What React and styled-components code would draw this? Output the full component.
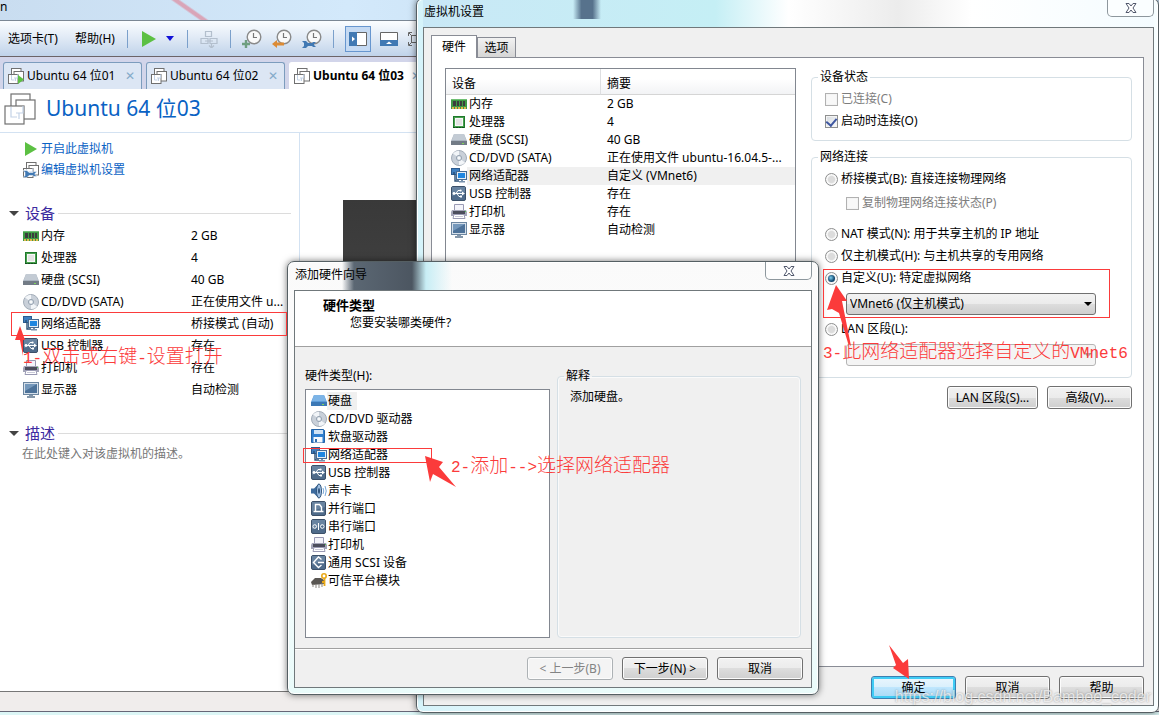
import styled, { createGlobalStyle, css } from 'styled-components';

const summary = [
  { icon: 'memory', name: '内存', value: '2 GB' },
  { icon: 'cpu', name: '处理器', value: '4' },
  { icon: 'disk', name: '硬盘 (SCSI)', value: '40 GB' },
  { icon: 'cd', name: 'CD/DVD (SATA)', value: '正在使用文件 u...' },
  { icon: 'network', name: '网络适配器', value: '桥接模式 (自动)' },
  { icon: 'usb', name: 'USB 控制器', value: '存在' },
  { icon: 'printer', name: '打印机', value: '存在' },
  { icon: 'display', name: '显示器', value: '自动检测' },
];

const settings = summary.map((item) => {
  if (item.icon === 'cd') return { ...item, value: '正在使用文件 ubuntu-16.04.5-...' };
  if (item.icon === 'network') return { ...item, value: '自定义 (VMnet6)', selected: true };
  return item;
});

const hardwareTypes = [
  { icon: 'blueDisk', name: '硬盘', selected: true },
  { icon: 'cd', name: 'CD/DVD 驱动器' },
  { icon: 'floppy', name: '软盘驱动器' },
  { icon: 'network', name: '网络适配器' },
  { icon: 'usb', name: 'USB 控制器' },
  { icon: 'sound', name: '声卡' },
  { icon: 'parallel', name: '并行端口' },
  { icon: 'serial', name: '串行端口' },
  { icon: 'printer', name: '打印机' },
  { icon: 'scsi', name: '通用 SCSI 设备' },
  { icon: 'tpm', name: '可信平台模块' },
];

const tile = (
  <>
    <rect x="0.5" y="0.5" width="14" height="14" rx="1.5" fill="#4f6b8a" stroke="#3c5069" />
    <path d="M1 1h13v5L1 10z" fill="#6883a0" />
  </>
);

const drawings = {
  memory: (
    <>
      <path d="M0 3h16v10H0z" fill="#3e9a45" />
      <path d="M0 3h16v1H0z" fill="#6fbf73" />
      <path d="M2 5h3v5H2zM6 5h2v5H6zM9 5h2v5H9zM12 5h2v5h-2z" fill="#3a3f3c" />
      <path d="M1 12h14" stroke="#e0b64c" strokeWidth="2" strokeDasharray="2 1" />
    </>
  ),
  cpu: (
    <>
      <rect x="2.5" y="2.5" width="11" height="11" fill="#49a04f" stroke="#1f7a2c" />
      <rect x="4.5" y="4.5" width="7" height="7" fill="#e4e4e4" stroke="#f8f8f8" />
      <path d="M2 13.5h12" stroke="#12501b" strokeDasharray="2 1" />
    </>
  ),
  disk: (
    <>
      <path d="M3 2h10l3 7v4H0V9z" fill="#aab4c0" />
      <path d="M3 2h10l2 6H1z" fill="#c3cbd4" />
      <path d="M0 9h16v4H0z" fill="#727b86" />
      <path d="M11 11.5h2" stroke="#7ed957" />
    </>
  ),
  blueDisk: (
    <>
      <path d="M3 2h10l3 7v4H0V9z" fill="#5b9bd8" />
      <path d="M3 2h10l2 6H1z" fill="#7db4e6" />
      <path d="M0 9h16v4H0z" fill="#3b78b5" />
      <path d="M11 11.5h2" stroke="#7ed957" />
    </>
  ),
  cd: (
    <>
      <circle cx="8" cy="8" r="7.5" fill="#c9d0d9" stroke="#a3adb8" />
      <path d="M8 8L2 3.5A7.5 7.5 0 0 1 8 .8zM8 8l6 4.5A7.5 7.5 0 0 1 8 15z" fill="#f2f5f8" />
      <circle cx="8" cy="8" r="2.6" fill="#dfe5ec" stroke="#98a4b2" />
      <circle cx="8" cy="8" r="1" fill="#fff" />
    </>
  ),
  network: (
    <>
      <rect x="0.5" y="0.5" width="8" height="6" fill="#3f7fc0" stroke="#2d5b8e" />
      <path d="M4 7v6h4M3 4v3" fill="none" stroke="#2c4f75" strokeWidth="1.4" />
      <rect x="5.5" y="3.5" width="10" height="8" fill="#e6eef6" stroke="#4a6c91" />
      <rect x="7" y="5" width="7" height="5" fill="#1f86e0" />
      <path d="M10 12h2v1h2v1.5H8V13h2z" fill="#7790ab" />
    </>
  ),
  usb: (
    <>
      {tile}
      <path d="M2 7.5h9M5 7.5l2-3h2M6 7.5l2 3h1" fill="none" stroke="#fff" />
      <path d="M11 5.5l3 2-3 2z" fill="#fff" />
      <circle cx="3" cy="7.5" r="1.4" fill="#fff" />
      <circle cx="9.6" cy="4.5" r="1.1" fill="#fff" />
      <path d="M9 9.5h2v2H9z" fill="#fff" />
    </>
  ),
  printer: (
    <>
      <path d="M3.5 0.5h9v6h-9z" fill="#f4f4fa" stroke="#9a9ab4" />
      <path d="M1 6h14l1 2v4H0V8z" fill="#a4a5b8" />
      <path d="M2 7h12v3H2z" fill="#4b4d5c" />
      <path d="M14 7.5h1" stroke="#55c552" />
      <path d="M3 10.500h10l1 4H2z" fill="#fff" stroke="#9a9ab4" />
      <path d="M4 12.500h8" stroke="#c9c9d8" />
    </>
  ),
  display: (
    <>
      <rect x="0.5" y="0.5" width="15" height="12" fill="#d6e0ea" stroke="#6c86a0" />
      <rect x="2" y="2" width="12" height="9" fill="#4d7299" />
      <path d="M2 2h12L2 9z" fill="#7598bb" />
      <path d="M6 13h4v1h2v2H4v-2h2z" fill="#8497aa" />
    </>
  ),
  floppy: (
    <>
      <path d="M0.5 0.5h12l1 1v12h-13z" fill="#2f7fd0" stroke="#2463a6" />
      <path d="M3 1h9v4H3z" fill="#cfe3f7" />
      <path d="M2.5 8h9v5.5h-9z" fill="#f5f9fd" />
      <path d="M4 10h2v3H4z" fill="#2f6cae" />
    </>
  ),
  sound: (
    <>
      <path d="M0 5.500h3L8 0.500v15L3 10.500H0z" fill="#3c6a9d" />
      <ellipse cx="8" cy="8" rx="2.500" ry="7" fill="#9dbde0" stroke="#31577f" />
      <ellipse cx="8" cy="8" rx="1" ry="3" fill="#2c5079" />
      <path d="M12 5q1.500 3 0 6M14 3q2.500 5 0 10" fill="none" stroke="#76a6d6" />
    </>
  ),
  parallel: (
    <>
      {tile}
      <path d="M4.5 10V3.500h4L10.500 6v4M2.500 10.500h10" fill="none" stroke="#fff" strokeWidth="1.4" />
    </>
  ),
  serial: (
    <>
      {tile}
      <circle cx="3.700" cy="7.500" r="1.800" fill="none" stroke="#fff" />
      <circle cx="11.300" cy="7.500" r="1.800" fill="none" stroke="#fff" />
      <path d="M7.500 4v7" stroke="#fff" />
    </>
  ),
  scsi: (
    <>
      {tile}
      <path
        d="M10.500 4.500L7.500 2 2.500 7.500l5 5 3-2.500M7 7.500h6"
        fill="none"
        stroke="#fff"
        strokeWidth="1.4"
      />
    </>
  ),
  tpm: (
    <>
      <path d="M0 9l4-4h6l3 2v4L1 12z" fill="#5a5753" />
      <path d="M2 11v3M5 11v4M8 11v4M11 10v4" stroke="#8b8781" />
      <circle cx="13" cy="3" r="2.200" fill="none" stroke="#e9a817" strokeWidth="1.600" />
      <path d="M13.500 5v8M13 9h-2" stroke="#e9a817" strokeWidth="1.800" />
    </>
  ),
};

const wrench = 'M0 0h4l2 2h4l1 -1h3l-2 2v1l2 2h-3l-1 -1H6L4 7H0l2-2V2z';

function HardwareIcon({ type }) {
  return (
    <Glyph width="16" height="16" viewBox="0 0 16 16" aria-hidden="true">
      {drawings[type]}
    </Glyph>
  );
}

function StackIcon({ size, badge }) {
  return (
    <Glyph width={size} height={size} viewBox="0 0 32 32" aria-hidden="true">
      <g fill="#fff" stroke="#707070" strokeWidth={size > 20 ? 1.2 : 2}>
        <rect x="7" y="1" width="19" height="19" />
        <rect x="12" y="7" width="19" height="19" />
        <rect x="1" y="13" width="19" height="18" />
      </g>
      <path
        d="M7 14v10h6M12 20h7v-7M15 20v6"
        fill="none"
        stroke="#c3d2e6"
        strokeWidth={size > 20 ? 1.2 : 2}
      />
      {badge === 'play' && <path d="M20 14l12 9-12 9z" fill="#5cc043" />}
      {badge === 'wrench' && (
        <path d={wrench} fill="#4179b3" stroke="#fff" strokeWidth="0.5" transform="translate(0 17) scale(2)" />
      )}
    </Glyph>
  );
}

function ClockIcon({ children }) {
  return (
    <Glyph width="20" height="20" viewBox="0 0 20 20" aria-hidden="true">
      <circle cx="12" cy="8" r="6.8" fill="#fafafa" stroke="#8a8a8a" strokeWidth="1.4" />
      <path d="M11.5 4v4.500H15" fill="none" stroke="#777" strokeWidth="1.2" />
      {children}
    </Glyph>
  );
}

function CloseIcon() {
  return (
    <Glyph width="12" height="10" viewBox="0 0 12 10" aria-hidden="true">
      <path
        d="M1 0.500h3l2 2.500 2-2.500h3L8 5l3 4.500H8L6 7 4 9.500H1L4 5z"
        fill="#fff"
        stroke="#51586c"
      />
    </Glyph>
  );
}

function MainWindow() {
  return (
    <Machine>
      <TitleStrip>n</TitleStrip>
      <Toolbar>
        <Menus>
          <MenuButton type="button">选项卡(T)</MenuButton>
          <MenuButton type="button">帮助(H)</MenuButton>
        </Menus>
        <Separator />
        <Tools $gap={5}>
          <ToolButton type="button" aria-label="开启">
            <svg width="14" height="16" viewBox="0 0 14 16">
              <path d="M0 0l14 8-14 8z" fill="#5cc043" />
            </svg>
          </ToolButton>
          <ToolButton type="button" $width={12} aria-label="电源选项">
            <svg width="8" height="5" viewBox="0 0 8 5">
              <path d="M0 0h8L4 5z" fill="#1212d8" />
            </svg>
          </ToolButton>
        </Tools>
        <Separator />
        <ToolButton type="button" aria-label="发送" disabled>
          <svg width="18" height="18" viewBox="0 0 18 18">
            <path
              d="M5.500 1.500h6v5h-6zM1 8.500h7v5H1zM10 8.500h7v5h-7zM5 11h8M11.500 14v4M9 15.500l2.500 2.500 2.500-2.500"
              fill="none"
              stroke="#b3bfcd"
              strokeWidth="1.2"
            />
          </svg>
        </ToolButton>
        <Separator />
        <Tools $gap={10}>
          <ToolButton type="button" aria-label="拍摄快照">
            <ClockIcon>
              <path d="M4 11v8M0 15h8" stroke="#6f9f80" strokeWidth="2.4" />
            </ClockIcon>
          </ToolButton>
          <ToolButton type="button" aria-label="恢复快照">
            <ClockIcon>
              <path d="M0 15l5-4v2.500h7v3H5V19z" fill="#dc8b35" />
            </ClockIcon>
          </ToolButton>
          <ToolButton type="button" aria-label="管理快照">
            <ClockIcon>
              <path d={wrench} fill="#4179b3" transform="translate(0 12)" />
            </ClockIcon>
          </ToolButton>
        </Tools>
        <Separator />
        <Tools $gap={8}>
          <ToolButton type="button" $width={26} $pressed aria-label="显示库">
            <svg width="18" height="14" viewBox="0 0 18 14">
              <path d="M0.500 0.500h17v13H0.500z" fill="#fff" stroke="#666" />
              <path d="M0 0h8v14H0z" fill="#4179b3" />
              <path d="M3 4.500l3 2.500-3 2.500z" fill="#fff" />
            </svg>
          </ToolButton>
          <ToolButton type="button" aria-label="显示缩略图">
            <svg width="18" height="14" viewBox="0 0 18 14">
              <path d="M0.500 0.500h17v13H0.500z" fill="#fff" stroke="#666" />
              <path d="M0 8h18v6H0z" fill="#4179b3" />
              <path d="M6 12l3-2.500 3 2.500z" fill="#fff" />
            </svg>
          </ToolButton>
          <ToolButton type="button" aria-label="全屏">
            <svg width="18" height="14" viewBox="0 0 18 14">
              <path
                d="M3.500 3.500h11v7h-11zM0.500 4V0.500H4M14 0.500h3.500V4M0.500 10v3.500H4M14 13.500h3.500V10M1 1l3 3M1 13l3-3"
                fill="none"
                stroke="#666"
              />
            </svg>
          </ToolButton>
        </Tools>
      </Toolbar>
      <MachineTabs>
        <MachineTab>
          <StackIcon size={16} badge="play" />
          <span>Ubuntu 64 位01</span>
          <TabClose type="button" aria-label="关闭">✕</TabClose>
        </MachineTab>
        <MachineTab>
          <StackIcon size={16} />
          <span>Ubuntu 64 位02</span>
          <TabClose type="button" aria-label="关闭">✕</TabClose>
        </MachineTab>
        <MachineTab $active>
          <StackIcon size={16} />
          <span>Ubuntu 64 位03</span>
          <TabClose type="button" aria-label="关闭">✕</TabClose>
        </MachineTab>
      </MachineTabs>
      <MachineHeader>
        <StackIcon size={32} />
        <h1>Ubuntu 64 位03</h1>
      </MachineHeader>
      <MachineBody>
        <Sidebar>
          <Commands>
            <a href="#start">
              <Glyph width="16" height="16" viewBox="0 0 16 16" aria-hidden="true">
                <path d="M2 1l12 7-12 7z" fill="#5cc043" />
              </Glyph>
              开启此虚拟机
            </a>
            <a href="#edit">
              <StackIcon size={16} badge="wrench" />
              编辑虚拟机设置
            </a>
          </Commands>
          <SectionTitle>设备</SectionTitle>
          <DeviceTable>
            <tbody>
              {summary.map((item) => (
                <tr key={item.name}>
                  <td>
                    <IconLabel>
                      <HardwareIcon type={item.icon} />
                      {item.name}
                    </IconLabel>
                  </td>
                  <td>{item.value}</td>
                </tr>
              ))}
            </tbody>
          </DeviceTable>
          <SectionTitle>描述</SectionTitle>
          <Description>在此处键入对该虚拟机的描述。</Description>
        </Sidebar>
        <Preview>
          <Screen />
        </Preview>
      </MachineBody>
      <StatusBar />
    </Machine>
  );
}

function SettingsDialog() {
  return (
    <Settings>
      <TitleBar $tint>
        <h2>虚拟机设置</h2>
        <CloseButton type="button" aria-label="关闭">
          <CloseIcon />
        </CloseButton>
      </TitleBar>
      <SettingsClient>
        <DialogTabs>
          <DialogTab type="button" $active>硬件</DialogTab>
          <DialogTab type="button">选项</DialogTab>
        </DialogTabs>
        <TabPanel>
          <HardwareList>
            <HardwareTable>
              <thead>
                <tr>
                  <th>设备</th>
                  <th>摘要</th>
                </tr>
              </thead>
              <tbody>
                {settings.map((item) => (
                  <Row key={item.name} $selected={item.selected}>
                    <td>
                      <IconLabel>
                        <HardwareIcon type={item.icon} />
                        {item.name}
                      </IconLabel>
                    </td>
                    <td>{item.value}</td>
                  </Row>
                ))}
              </tbody>
            </HardwareTable>
          </HardwareList>
          <Options>
            <Group>
              <legend>设备状态</legend>
              <Option $disabled>
                <CheckBox disabled />
                已连接(C)
              </Option>
              <Option>
                <CheckBox defaultChecked />
                启动时连接(O)
              </Option>
            </Group>
            <Group>
              <legend>网络连接</legend>
              <Option>
                <Radio name="net" />
                桥接模式(B): 直接连接物理网络
              </Option>
              <Replicate>
                <Option $disabled>
                  <CheckBox disabled />
                  复制物理网络连接状态(P)
                </Option>
              </Replicate>
              <Option>
                <Radio name="net" />
                NAT 模式(N): 用于共享主机的 IP 地址
              </Option>
              <Option>
                <Radio name="net" />
                仅主机模式(H): 与主机共享的专用网络
              </Option>
              <Option>
                <Radio name="net" defaultChecked />
                自定义(U): 特定虚拟网络
              </Option>
              <SelectBox>
                <select aria-label="特定虚拟网络">
                  <option>VMnet6 (仅主机模式)</option>
                </select>
              </SelectBox>
              <Option>
                <Radio name="net" />
                LAN 区段(L):
              </Option>
              <SelectBox $disabled>
                <select aria-label="LAN 区段" disabled />
              </SelectBox>
            </Group>
            <OptionButtons>
              <Button type="button" $width={91}>LAN 区段(S)...</Button>
              <Button type="button">高级(V)...</Button>
            </OptionButtons>
          </Options>
        </TabPanel>
        <Footer>
          <Button type="button" $primary>确定</Button>
          <Button type="button">取消</Button>
          <Button type="button">帮助</Button>
        </Footer>
      </SettingsClient>
    </Settings>
  );
}

function WizardDialog() {
  return (
    <Wizard>
      <TitleBar>
        <h2>添加硬件向导</h2>
        <CloseButton type="button" aria-label="关闭">
          <CloseIcon />
        </CloseButton>
      </TitleBar>
      <WizardClient>
        <WizardHeader>
          <h3>硬件类型</h3>
          <p>您要安装哪类硬件?</p>
        </WizardHeader>
        <WizardBody>
          <TypeColumn>
            <span id="types">硬件类型(H):</span>
            <TypeList aria-labelledby="types">
              {hardwareTypes.map((item) => (
                <TypeItem key={item.name} $selected={item.selected}>
                  <HardwareIcon type={item.icon} />
                  <span>{item.name}</span>
                </TypeItem>
              ))}
            </TypeList>
          </TypeColumn>
          <Explain>
            <legend>解释</legend>
            添加硬盘。
          </Explain>
        </WizardBody>
        <WizardFooter>
          <Button type="button" $width={86} disabled>&lt; 上一步(B)</Button>
          <Button type="button" $width={86}>下一步(N) &gt;</Button>
          <Button type="button" $width={86}>取消</Button>
        </WizardFooter>
      </WizardClient>
    </Wizard>
  );
}

function Annotations() {
  return (
    <>
      <Frame $x={11} $y={312} $w={276} $h={24} />
      <Frame $x={303} $y={448} $w={129} $h={15} />
      <Frame $x={823} $y={269} $w={287} $h={49} />
      <Arrows width="1159" height="715" viewBox="0 0 1159 715" aria-hidden="true">
        <path d="M20 326l5 14-2 0 0 16-3-16-5 0z" />
        <path d="M425 456l18 6-4 5 17 20-23-13-3 8z" />
        <path d="M836 285l11 16-5 0 9 45-3-3-9-30-7-4-5 1z" />
        <path d="M889 645l14 18 5-4 1 20-16-11 3-3z" />
      </Arrows>
      <Note $x={23} $y={343}>
        <Half>1-</Half>双击或右键<Half>-</Half>设置打开
      </Note>
      <Note $x={451} $y={452}>
        <Half>2-</Half>添加<Half>--&gt;</Half>选择网络适配器
      </Note>
      <Note $x={823} $y={338}>
        <Half>3-</Half>此网络适配器选择自定义的<Half>VMnet6</Half>
      </Note>
      <Watermark>https://blog.csdn.net/Bamboo_coder</Watermark>
    </>
  );
}

export default function App() {
  return (
    <Desktop>
      <GlobalStyle />
      <MainWindow />
      <SettingsDialog />
      <WizardDialog />
      <Annotations />
    </Desktop>
  );
}

const GlobalStyle = createGlobalStyle`
  * {
    box-sizing: border-box;
  }
  body {
    margin: 0;
    background: #dff0f8;
    color: #000;
    font-family: 'Noto Sans', 'Noto Sans CJK SC', sans-serif;
    font-size: 12px;
    line-height: 18px;
  }
  button,
  select {
    font: inherit;
    color: inherit;
    padding: 0;
  }
  h1, h2, h3, p, ul {
    margin: 0;
    padding: 0;
    font-weight: 400;
  }
  h2 {
    font-size: 12px;
  }
`;

const Desktop = styled.main`
  position: relative;
  min-height: 100vh;
  overflow: hidden;
`;

const Glyph = styled.svg`
  flex: none;
`;

const Machine = styled.section`
  display: flex;
  flex-direction: column;
  height: 100vh;
  white-space: nowrap;
`;

const TitleStrip = styled.header`
  height: 20px;
  line-height: 14px;
  background: linear-gradient(35deg, transparent 44%, #d9a5b8 48% 54%, transparent 58%) 165px 0 / 48px
      20px no-repeat,
    linear-gradient(90deg, #c9ddf0, #d3e9fb 30%, #c9e0f2 50%, #d6ecfd 65%, #c3d8ea);
`;

const Toolbar = styled.div`
  display: flex;
  align-items: center;
  gap: 11px;
  height: 37px;
  padding-left: 8px;
  border-top: 1px solid #7b8794;
  border-bottom: 1px solid #6c6468;
  background: linear-gradient(#fbfdff, #dfe9f5 50%, #c0d3ea);
`;

const Menus = styled.nav`
  display: flex;
  gap: 17px;
  padding-right: 1px;
`;

const MenuButton = styled.button`
  border: 0;
  background: none;
`;

const Separator = styled.i`
  width: 1px;
  height: 18px;
  background: #7ba0cb;
`;

const Tools = styled.div`
  display: flex;
  align-items: center;
  gap: ${(props) => props.$gap}px;
`;

const ToolButton = styled.button`
  display: grid;
  flex: none;
  place-items: center;
  width: ${(props) => props.$width || 20}px;
  height: 26px;
  border: ${(props) => (props.$pressed ? '1px solid #6796cf' : '0')};
  background: ${(props) => (props.$pressed ? '#c5daf3' : 'none')};
`;

const MachineTabs = styled.nav`
  display: flex;
  align-items: flex-end;
  gap: 4px;
  height: 32px;
  padding-left: 3px;
  background: #d2d5ea;
`;

const MachineTab = styled.div`
  display: flex;
  align-items: center;
  gap: 3px;
  width: 139px;
  height: 27px;
  padding: 0 6px 0 4px;
  border: 1px solid #7c9cbd;
  border-bottom: 0;
  border-radius: 3px 3px 0 0;
  background: #dce6f4;
  ${(props) =>
    props.$active &&
    css`
      border-color: #fff;
      background: #fff;
      font-weight: 700;
    `}
`;

const TabClose = styled.button`
  margin-left: auto;
  border: 0;
  background: none;
  color: #84abc9;
  font: 700 12px/18px 'DejaVu Sans', sans-serif;
`;

const MachineHeader = styled.header`
  display: flex;
  align-items: center;
  gap: 10px;
  height: 44px;
  padding: 0 0 4px 4px;
  border-bottom: 1px solid #d3e2f2;
  background: #fff;
  h1 {
    color: #0a62c4;
    font-size: 21px;
    line-height: 34px;
    padding-bottom: 2px;
  }
`;

const MachineBody = styled.div`
  display: flex;
  flex: 1;
  background: #fff;
`;

const Sidebar = styled.aside`
  flex: none;
  width: 300px;
  border-right: 1px solid #d3e2f2;
`;

const Commands = styled.nav`
  display: grid;
  padding: 5px 0 22px 23px;
  a {
    display: flex;
    align-items: center;
    gap: 2px;
    height: 21px;
    color: #0a62c4;
    text-decoration: none;
  }
`;

const SectionTitle = styled.h2`
  display: flex;
  align-items: center;
  gap: 3px;
  height: 22px;
  margin-right: 8px;
  padding-left: 9px;
  color: #3c2ba0;
  && {
    font-size: 15px;
  }
  &::before {
    content: '';
    margin-right: 3px;
    border: 5px solid transparent;
    border-top-color: #444;
    border-bottom: 0;
  }
  &::after {
    content: '';
    flex: 1;
    height: 1px;
    background: #dcdcdc;
  }
`;

const DeviceTable = styled.table`
  width: 100%;
  margin: 1px 0 21px;
  border-collapse: collapse;
  table-layout: fixed;
  td {
    height: 22px;
    padding: 0;
  }
  td:first-child {
    width: 191px;
    padding-left: 23px;
  }
`;

const IconLabel = styled.span`
  display: flex;
  align-items: center;
  gap: 2px;
`;

const Description = styled.p`
  padding: 1px 0 0 22px;
  color: #777;
`;

const Preview = styled.div`
  flex: 1;
  padding: 67px 0 0 43px;
`;

const Screen = styled.div`
  width: 300px;
  height: 200px;
  background: linear-gradient(#393939, #4a4a4a);
`;

const StatusBar = styled.footer`
  height: 24px;
  border-top: 1px solid #777;
  border-bottom: 3px solid #dcf6f6;
  background: #f0edec;
  box-shadow: inset 0 -1px #667;
`;

const windowFrame = css`
  position: absolute;
  display: flex;
  flex-direction: column;
  border: 1px solid #555f63;
  border-radius: 7px;
  box-shadow: 0 0 7px rgba(0, 0, 0, 0.55), inset 0 0 0 1px #fff;
  white-space: nowrap;
`;

const Settings = styled.section`
  ${windowFrame}
  top: -2px;
  right: 0;
  bottom: 2px;
  left: 416px;
  padding: 0 4px 6px 6px;
  background: linear-gradient(90deg, #d5f3fa, #fff 40%, #f6feff);
`;

const Wizard = styled.section`
  ${windowFrame}
  top: 261px;
  left: 287px;
  width: 532px;
  padding: 0 6px 6px;
  background: linear-gradient(#fafafa, #fff 50%, #e9fbfa);
`;

const TitleBar = styled.header`
  display: flex;
  justify-content: space-between;
  height: 28px;
  padding-left: 1px;
  line-height: 26px;
  background: ${(props) =>
    props.$tint
      ? `linear-gradient(90deg, transparent, #57728c 30% 70%, transparent) 150px 0 / 28px 20px no-repeat,
         linear-gradient(90deg, #c9e8f6, #c5eff5 40%, #fff 50%, #ececec 65%, #fff 75%, #f4fcff)`
      : `linear-gradient(90deg, transparent, #5b6773 12px, #4c5661 70px, #c8eef5 84px, transparent 110px)
           48px 0 / 120px 28px no-repeat`};
`;

const CloseButton = styled.button`
  display: grid;
  place-items: center;
  width: 47px;
  height: 18px;
  border: 1px solid #8d979d;
  border-top: 0;
  border-radius: 0 0 5px 5px;
  background: rgba(255, 255, 255, 0.5);
`;

const client = css`
  display: flex;
  flex: 1;
  flex-direction: column;
  border: 1px solid #70787b;
  background: #f0f0f0;
`;

const SettingsClient = styled.div`
  ${client}
  padding: 7px 9px 6px 7px;
`;

const DialogTabs = styled.nav`
  display: flex;
  align-items: flex-end;
`;

const DialogTab = styled.button`
  width: 39px;
  height: 20px;
  border: 1px solid #898c95;
  border-bottom: 0;
  background: linear-gradient(#f2f2f2, #d6d6d6);
  ${(props) =>
    props.$active &&
    css`
      z-index: 1;
      width: 46px;
      height: 23px;
      margin-bottom: -1px;
      background: #fff;
    `}
`;

const TabPanel = styled.div`
  display: flex;
  flex: 1;
  gap: 15px;
  padding: 10px 11px 10px 13px;
  border: 1px solid #898c95;
  background: #fff;
`;

const HardwareList = styled.div`
  flex: 1;
  border: 1px solid #828790;
`;

const HardwareTable = styled.table`
  width: 100%;
  border-spacing: 0;
  table-layout: fixed;
  th {
    height: 26px;
    padding: 4px 0 0 6px;
    border-bottom: 1px solid #d5d5d5;
    background: linear-gradient(#fff 40%, #f2f3f5);
    font-weight: 400;
    text-align: left;
  }
  th:first-child {
    width: 155px;
    border-right: 1px solid #dedfe1;
  }
  td {
    height: 18px;
    padding: 0 0 0 6px;
  }
  td:first-child {
    padding-left: 5px;
  }
`;

const Row = styled.tr`
  background: ${(props) =>
    props.$selected ? 'linear-gradient(90deg, #fff 21px, #f0f0f0 21px)' : 'none'};
`;

const Options = styled.div`
  flex: none;
  width: 321px;
`;

const Group = styled.fieldset`
  margin: 0 0 7px;
  padding: 2px 13px 8px;
  border: 1px solid #d5dfe5;
  border-radius: 4px;
  legend {
    margin-left: -7px;
    padding: 0 2px;
  }
`;

const Option = styled.label`
  display: flex;
  align-items: center;
  gap: 3px;
  height: 22px;
  color: ${(props) => (props.$disabled ? '#7d7d7d' : '#000')};
`;

const Replicate = styled.div`
  padding: 2px 0 9px 21px;
`;

const CheckBox = styled.input.attrs({ type: 'checkbox' })`
  appearance: none;
  display: grid;
  place-items: center;
  width: 13px;
  height: 13px;
  margin: 0;
  border: 1px solid #8e8f8f;
  background: linear-gradient(135deg, #d5dade, #fafbfc);
  box-shadow: inset 0 0 0 1px #f4f4f4;
  &:disabled {
    border-color: #b1b1b1;
    background: #f8f8f8;
  }
  &:checked::after {
    content: '';
    width: 5px;
    height: 8px;
    margin-bottom: 2px;
    border: solid #3f57a0;
    border-width: 0 2px 2px 0;
    transform: rotate(40deg);
  }
`;

const Radio = styled.input.attrs({ type: 'radio' })`
  appearance: none;
  display: grid;
  place-items: center;
  width: 13px;
  height: 13px;
  margin: 0;
  border: 1px solid #8e8f8f;
  border-radius: 50%;
  background: radial-gradient(#dcdcdc 40%, #fff 60%, #ccc);
  &:checked::after {
    content: '';
    width: 7px;
    height: 7px;
    border-radius: 50%;
    background: radial-gradient(circle at 40% 40%, #7fd0f0, #12486f 60%);
  }
`;

const SelectBox = styled.div`
  position: relative;
  width: 250px;
  margin: 4px 0 3px 21px;
  select {
    appearance: none;
    display: block;
    width: 100%;
    height: 22px;
    padding: 0 3px;
    border: 1px solid ${(props) => (props.$disabled ? '#b5b5b5' : '#707070')};
    border-radius: 3px;
    background: ${(props) =>
      props.$disabled ? '#f4f4f4' : 'linear-gradient(#f2f2f2, #ebebeb 50%, #dddddd 50%, #cfcfcf)'};
    opacity: 1;
  }
  &::after {
    content: '';
    position: absolute;
    top: 9px;
    right: 4px;
    border: 4px solid transparent;
    border-top-color: ${(props) => (props.$disabled ? '#a0a0a0' : '#000')};
    border-bottom: 0;
  }
`;

const OptionButtons = styled.div`
  display: flex;
  justify-content: flex-end;
  gap: 9px;
  padding-top: 1px;
`;

const Button = styled.button`
  width: ${(props) => props.$width || 85}px;
  height: 23px;
  border: 1px solid #707070;
  border-radius: 3px;
  background: linear-gradient(#f2f2f2, #ebebeb 50%, #dddddd 50%, #cfcfcf);
  box-shadow: inset 0 0 0 1px #fcfcfc;
  ${(props) =>
    props.$primary &&
    css`
      border-color: #3c7fb1;
      background: linear-gradient(#eaf6fd, #d9f0fc 50%, #bee6fd 50%, #a7d9f5);
      box-shadow: inset 0 0 0 2px #40ccf5;
    `}
  &:disabled {
    border-color: #adb2b5;
    background: #f4f4f4;
    color: #838383;
  }
`;

const Footer = styled.footer`
  display: flex;
  justify-content: flex-end;
  gap: 9px;
  padding-top: 9px;
`;

const WizardClient = styled.div`
  ${client}
`;

const WizardHeader = styled.header`
  height: 56px;
  padding: 5px 28px;
  border-bottom: 1px solid #a0a0a0;
  background: #fff;
  h3 {
    font-size: 13px;
    font-weight: 700;
  }
  p {
    padding-left: 27px;
  }
`;

const WizardBody = styled.div`
  display: flex;
  gap: 7px;
  padding: 20px 10px 10px;
  border-bottom: 1px solid #a0a0a0;
  box-shadow: 0 1px #fff;
`;

const TypeColumn = styled.div`
  width: 245px;
`;

const TypeList = styled.ul`
  height: 249px;
  margin-top: 4px;
  padding: 2px 5px;
  border: 1px solid #828790;
  background: #fff;
  list-style: none;
`;

const TypeItem = styled.li`
  display: flex;
  align-items: center;
  height: 18px;
  span {
    padding: 0 5px 0 1px;
    background: ${(props) => (props.$selected ? '#f0f0f0' : 'none')};
  }
`;

const Explain = styled.fieldset`
  flex: 1;
  margin: 0;
  padding: 3px 12px;
  border: 1px solid #d5dfe5;
  border-radius: 4px;
  box-shadow: inset 0 0 0 1px #fafafa;
  legend {
    margin-left: -6px;
    padding: 0 2px;
  }
`;

const WizardFooter = styled.footer`
  display: flex;
  justify-content: flex-end;
  gap: 9px;
  padding: 8px 8px 7px;
`;

const red = '#fb3b3b';

const Frame = styled.div`
  position: absolute;
  top: ${(props) => props.$y}px;
  left: ${(props) => props.$x}px;
  width: ${(props) => props.$w}px;
  height: ${(props) => props.$h}px;
  border: 1px solid ${red};
`;

const Arrows = styled.svg`
  position: absolute;
  top: 0;
  left: 0;
  fill: ${red};
  pointer-events: none;
`;

const Note = styled.p`
  position: absolute;
  top: ${(props) => props.$y}px;
  left: ${(props) => props.$x}px;
  color: ${red};
  font-family: 'Noto Sans CJK SC', sans-serif;
  font-size: 19px;
  font-weight: 300;
  line-height: 24px;
  white-space: nowrap;
`;

const Half = styled.span`
  font-family: 'Liberation Mono', monospace;
  font-size: 16px;
`;

const Watermark = styled.span`
  position: absolute;
  right: 8px;
  bottom: 9px;
  color: rgba(255, 255, 255, 0.7);
  font-family: 'Liberation Sans', sans-serif;
  font-size: 16px;
  text-shadow: 0 0 2px rgba(90, 90, 90, 0.6);
`;
